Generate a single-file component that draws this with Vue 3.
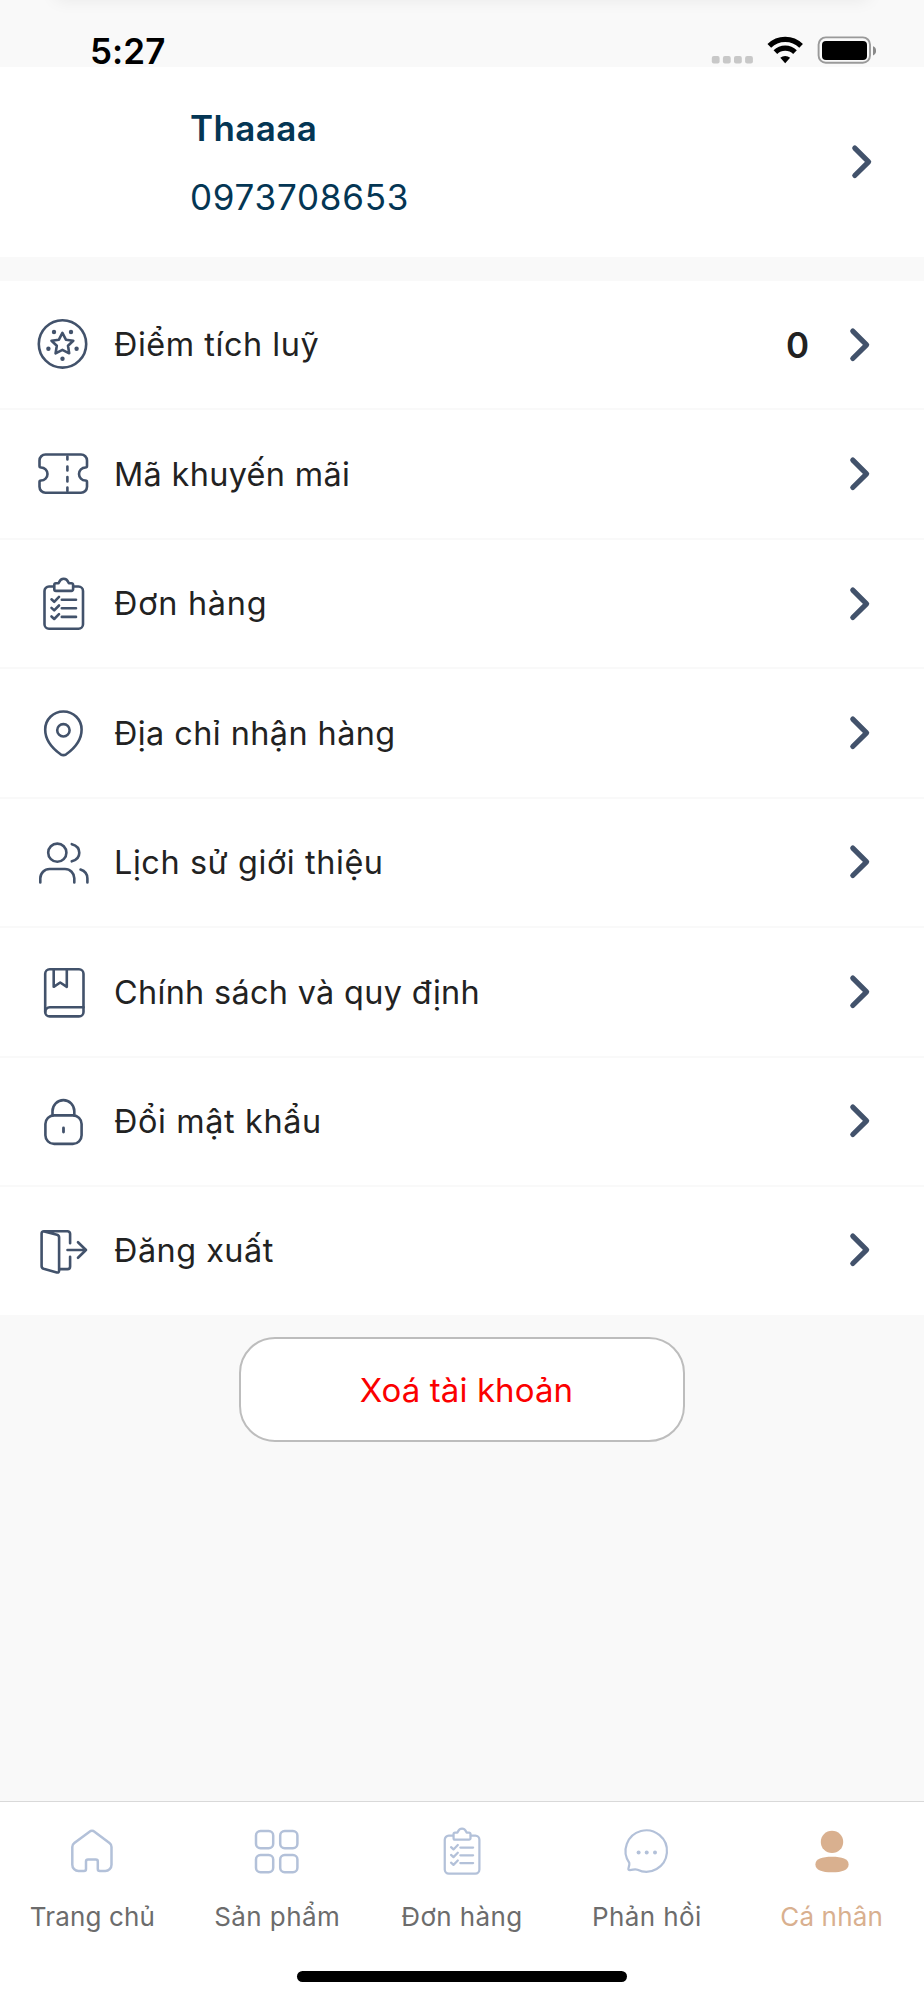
<script setup>
const menu = [
  { key: 'points', label: 'Điểm tích luỹ', value: '0' },
  { key: 'promo', label: 'Mã khuyến mãi' },
  { key: 'orders', label: 'Đơn hàng' },
  { key: 'address', label: 'Địa chỉ nhận hàng' },
  { key: 'referral', label: 'Lịch sử giới thiệu' },
  { key: 'policy', label: 'Chính sách và quy định' },
  { key: 'password', label: 'Đổi mật khẩu' },
  { key: 'logout', label: 'Đăng xuất' }
]

const tabs = [
  { key: 'home', label: 'Trang chủ' },
  { key: 'products', label: 'Sản phẩm' },
  { key: 'tab-orders', label: 'Đơn hàng' },
  { key: 'feedback', label: 'Phản hồi' },
  { key: 'me', label: 'Cá nhân', active: true }
]
</script>

<template>
  <div class="screen">
    <header class="status">
      <div class="edge-shadow"></div>
      <span class="clock">5:27</span>
      <svg class="indicators" width="166" height="32" viewBox="0 0 166 32">
        <g fill="#c8c8c8">
          <rect x="1.8" y="22" width="7.8" height="7.4" rx="2" />
          <rect x="12.9" y="22" width="7.8" height="7.4" rx="2" />
          <rect x="24" y="22" width="7.8" height="7.4" rx="2" />
          <rect x="35.1" y="22" width="7.8" height="7.4" rx="2" />
        </g>
        <g fill="none" stroke="#000">
          <path d="M59.3 11.9a22.6 22.6 0 0 1 31.8 0" stroke-width="5.2" />
          <path d="M65.4 18.2a14 14 0 0 1 19.6 0" stroke-width="5.2" />
        </g>
        <path d="M70.3 23.8a7.2 7.2 0 0 1 9.8 0L75.2 29.2Z" fill="#000" />
        <rect x="108.6" y="3.4" width="51.4" height="25.4" rx="7.2" fill="none" stroke="#9a9a9a" stroke-width="1.9" />
        <rect x="112" y="7" width="45" height="19" rx="4" fill="#000" />
        <path d="M163 12.2c4.2 1.4 4.2 7.8 0 9.2Z" fill="#8a8a8a" />
      </svg>
    </header>

    <section class="profile">
      <div class="who">
        <div class="name">Thaaaa</div>
        <div class="phone">0973708653</div>
      </div>
      <svg class="chevron" width="24" height="38" viewBox="0 0 24 38">
        <path d="M4.8 5.1L18.6 18.8L4.8 32.5" />
      </svg>
    </section>

    <ul class="menu">
      <li v-for="item in menu" :key="item.key" class="row" :class="item.key">
        <svg class="icon" width="56" height="56" viewBox="0 0 56 56">
          <template v-if="item.key === 'points'">
            <circle cx="27.5" cy="26.9" r="23.7" />
            <path d="M27.4 15.9L30.9 22.7L38.3 23.7L33 28.8L34.2 36.3L27.4 32.9L20.6 36.3L21.8 28.8L16.5 23.7L23.9 22.7Z" />
            <g class="solid">
              <circle cx="19" cy="15" r="2.2" />
              <circle cx="36" cy="15" r="2.2" />
              <circle cx="13.4" cy="31.7" r="2.2" />
              <circle cx="41.6" cy="31.7" r="2.2" />
              <circle cx="27.5" cy="41.8" r="2.2" />
            </g>
          </template>
          <template v-else-if="item.key === 'promo'">
            <path d="M10.5 8.5H46a6 6 0 0 1 6 6V20a1.5 1.5 0 0 1 -1.5 1.5a6.5 6.5 0 0 0 0 13a1.5 1.5 0 0 1 1.5 1.5V40.8a6 6 0 0 1 -6 6H10.5a6 6 0 0 1 -6 -6V36a1.5 1.5 0 0 1 1.5 -1.5a6.5 6.5 0 0 0 0 -13a1.5 1.5 0 0 1 -1.5 -1.5V14.5a6 6 0 0 1 6 -6Z" />
            <path d="M32.4 10.5V13.5M32.4 20.5V24.5M32.4 31V35.5M32.4 41.5V45" />
          </template>
          <template v-else-if="item.key === 'orders'">
            <path d="M18.5 10.5H14a4.5 4.5 0 0 0 -4.5 4.5V48.2a4.5 4.5 0 0 0 4.5 4.5H43.5a4.5 4.5 0 0 0 4.5 -4.5V15a4.5 4.5 0 0 0 -4.5 -4.5H38.5" />
            <path d="M20.9 7.2H23.3C24.3 7.2 24 2.7 28.7 2.7C33.4 2.7 33.1 7.2 34.1 7.2H36.5a1.6 1.6 0 0 1 1.6 1.6V13.3a1.6 1.6 0 0 1 -1.6 1.6H20.9a1.6 1.6 0 0 1 -1.6 -1.6V8.8a1.6 1.6 0 0 1 1.6 -1.6Z" />
            <path d="M16.5 23.3L19.2 25.8L24 20.9M26.8 23.7H41M16.5 31.9L19.2 34.4L24 29.5M26.8 32.3H41M16.5 40.5L19.2 43L24 38.1M26.8 40.9H41" />
          </template>
          <template v-else-if="item.key === 'address'">
            <path d="M28.4 6.5C18.2 6.5 10.2 14.5 10.2 24.5C10.2 35 17.5 43.5 25.6 49.3Q28.4 51 31.2 49.3C39.3 43.5 46.6 35 46.6 24.5C46.6 14.5 38.6 6.5 28.4 6.5Z" />
            <circle cx="28.4" cy="25.3" r="6.2" />
          </template>
          <template v-else-if="item.key === 'referral'">
            <circle cx="22.3" cy="18.7" r="9.1" />
            <path d="M5.3 48.5V44.3a9.3 9.3 0 0 1 9.3 -9.3H30a9.3 9.3 0 0 1 9.3 9.3V48.5" />
            <path d="M36.8 10.2c10 2.6 10 14.5 0 17.1M45.5 35.6c4.5 1.5 6.9 4.5 6.9 8.9V48.5" />
          </template>
          <template v-else-if="item.key === 'policy'">
            <rect x="10.2" y="5.3" width="38.3" height="47.1" rx="4.5" />
            <path d="M10.2 48a4.6 4.6 0 0 1 4.6 -4.7H48.5M18.7 5.3V22.8L25.2 18.5L31.8 22.8V5.3" />
          </template>
          <template v-else-if="item.key === 'password'">
            <rect x="10.4" y="22.4" width="36.2" height="28.5" rx="8.7" />
            <path d="M17.5 22.4V18a10.9 10.9 0 0 1 21.8 0V22.4" />
            <path class="keyhole" d="M28.5 35V39" />
          </template>
          <template v-else>
            <path d="M9.3 9.6L22 12.8Q24.1 13.4 24.1 15.6V48.5Q24.1 51 21.8 50.4L8.6 46.8Q6.6 46.2 6.6 44V11.6Q6.6 9.2 9 9.2H32.5a2.6 2.6 0 0 1 2.6 2.6V21.3M35.1 34.7V44.5a2.6 2.6 0 0 1 -2.6 2.6H24.1" />
            <path d="M32.5 28H51M43 20.2L51 28L43 35.8" />
          </template>
        </svg>
        <span class="label">{{ item.label }}</span>
        <span v-if="item.value" class="value">{{ item.value }}</span>
        <svg class="chevron" width="24" height="38" viewBox="0 0 24 38">
          <path d="M4.8 5.1L18.6 18.8L4.8 32.5" />
        </svg>
      </li>
    </ul>

    <button class="delete">Xoá tài khoản</button>

    <nav class="tabs">
      <div v-for="tab in tabs" :key="tab.key" class="tab" :class="[tab.key, { active: tab.active }]">
        <svg class="tab-icon" width="52" height="52" viewBox="0 0 52 52">
          <path v-if="tab.key === 'home'" d="M20 39.400V31.800a2 2 0 0 1 2 -2H29.800a2 2 0 0 1 2 2V39.400a2 2 0 0 0 2 2H39.300a6.200 6.200 0 0 0 6.200 -6.200V17.500a5 5 0 0 0 -2 -4L28.800 2.300a4.600 4.600 0 0 0 -5.600 0L8.300 13.500a5 5 0 0 0 -2 4V35.200a6.200 6.200 0 0 0 6.200 6.200H18a2 2 0 0 0 2 -2Z" transform="translate(0 .6)" />
          <template v-else-if="tab.key === 'products'">
            <rect x="5" y="2" width="17.2" height="17.2" rx="4.5" />
            <rect x="29.2" y="2" width="17.2" height="17.2" rx="4.5" />
            <rect x="5" y="26.1" width="17.2" height="17.2" rx="4.5" />
            <rect x="29.2" y="26.1" width="17.2" height="17.2" rx="4.5" />
          </template>
          <g v-else-if="tab.key === 'tab-orders'" transform="translate(.2 -2.8) scale(.9)">
            <path d="M18.5 10.5H14a4.5 4.5 0 0 0 -4.5 4.5V48.2a4.5 4.5 0 0 0 4.5 4.5H43.5a4.5 4.5 0 0 0 4.5 -4.5V15a4.5 4.5 0 0 0 -4.5 -4.5H38.5" />
            <path d="M20.9 7.2H23.3C24.3 7.2 24 2.7 28.7 2.7C33.4 2.7 33.1 7.2 34.1 7.2H36.5a1.6 1.6 0 0 1 1.6 1.6V13.3a1.6 1.6 0 0 1 -1.6 1.6H20.9a1.6 1.6 0 0 1 -1.6 -1.6V8.8a1.6 1.6 0 0 1 1.6 -1.6Z" />
            <path d="M16.5 23.3L19.2 25.8L24 20.9M26.8 23.7H41M16.5 31.9L19.2 34.4L24 29.5M26.8 32.3H41M16.5 40.5L19.2 43L24 38.1M26.8 40.9H41" />
          </g>
          <template v-else-if="tab.key === 'feedback'">
            <path class="bubble" d="M8.3 33.9A20.7 20.7 0 1 1 16.5 40.8C14 39.6 12.5 40.8 8.9 41.1C5.4 41.3 9 37.4 8.3 33.9Z" />
            <g class="solid">
              <circle cx="17.6" cy="23.4" r="2" />
              <circle cx="25.7" cy="23.4" r="2" />
              <circle cx="34" cy="23.4" r="2" />
            </g>
          </template>
          <g v-else class="solid">
            <circle cx="26" cy="12.9" r="11.2" />
            <path d="M26 27.8C36 27.8 42.6 29.9 42.6 35.4C42.6 41.1 36 43.2 26 43.2C16 43.2 9.4 41.1 9.4 35.4C9.4 29.9 16 27.8 26 27.8Z" />
          </g>
        </svg>
        <span class="tab-label">{{ tab.label }}</span>
      </div>
      <div class="home-indicator"></div>
    </nav>
  </div>
</template>

<style>
body {
  background: #f9f9f9;
}
</style>

<style scoped>
.screen {
  display: flex;
  flex-direction: column;
  width: 924px;
  height: 2000px;
  overflow: hidden;
  background: #f9f9f9;
  font-family: Inter, "Noto Sans", sans-serif;
  color: #222;
}

.status {
  position: relative;
  display: flex;
  justify-content: space-between;
  align-items: flex-start;
  flex: none;
  box-sizing: border-box;
  height: 67px;
  padding: 34px 48px 0 90px;
  color: #000;
}
.edge-shadow {
  position: absolute;
  top: -20px;
  left: 56px;
  right: 56px;
  height: 18px;
  box-shadow: 0 1px 18px rgba(0, 0, 0, 0.08);
}
.clock {
  margin-top: 0.6px;
  font-size: 35px;
  font-weight: 600;
  line-height: 33px;
  letter-spacing: 0.1px;
}
.indicators {
  display: block;
}

.profile {
  display: flex;
  align-items: center;
  flex: none;
  box-sizing: border-box;
  height: 190px;
  padding: 0 50px 0 190px;
  background: #fff;
  color: #043654;
}
.who {
  flex: 1;
  font-size: 35px;
  line-height: 68px;
}
.name {
  font-weight: 600;
  letter-spacing: 0.4px;
}
.phone {
  padding-top: 1px;
  letter-spacing: 0.75px;
}
.chevron {
  flex: none;
  fill: none;
  stroke: #42526b;
  stroke-width: 5.2;
  stroke-linecap: round;
  stroke-linejoin: round;
}

.menu {
  flex: none;
  margin: 24px 0 0;
  padding: 0;
  list-style: none;
  background: #fff;
}
.row {
  display: flex;
  align-items: center;
  box-sizing: border-box;
  height: 129.43px;
  padding: 0 52px 0 35px;
  border-bottom: 2px solid #f9f9f9;
}
.row:last-child {
  height: 128px;
  padding-bottom: 2px;
  border-bottom: 0;
}
.icon {
  flex: none;
  fill: none;
  stroke: #42526b;
  stroke-width: 2.6;
  stroke-linecap: round;
  stroke-linejoin: round;
}
.icon .keyhole {
  stroke-width: 2.8;
}
.icon .solid {
  fill: #42526b;
  stroke: none;
}
.label {
  flex: 1;
  margin-left: 23px;
  padding-top: 1.4px;
  font-size: 32.4px;
  line-height: 48px;
  white-space: nowrap;
}
.points .label { letter-spacing: 0.55px; }
.promo .label { letter-spacing: 0.34px; }
.orders .label { letter-spacing: 0.75px; }
.address .label { letter-spacing: 0.44px; }
.referral .label { letter-spacing: 0.6px; }
.policy .label { letter-spacing: 0.33px; }
.password .label { letter-spacing: 0.62px; }
.logout .label { letter-spacing: 0.5px; }
.value {
  margin-right: 39px;
  padding-top: 1px;
  font-size: 35px;
  font-weight: 600;
  line-height: 48px;
}

.delete {
  flex: none;
  align-self: center;
  box-sizing: border-box;
  width: 446px;
  height: 105px;
  margin-top: 22px;
  padding: 1px 0 0 9px;
  border: 2px solid #bdbdbd;
  border-radius: 36px;
  background: #fff;
  color: #fb0000;
  font-family: inherit;
  font-size: 33px;
  letter-spacing: 0.1px;
}

.tabs {
  position: relative;
  display: grid;
  grid-template-columns: repeat(5, 1fr);
  box-sizing: border-box;
  height: 199px;
  margin-top: auto;
  padding-top: 27px;
  border-top: 1px solid #d9d9d9;
  background: #fff;
}
.tab {
  display: flex;
  flex-direction: column;
  align-items: center;
  color: #6c6c6c;
}
.tab-icon {
  overflow: visible;
  fill: none;
  stroke: #b3c1d9;
  stroke-width: 2.5;
  stroke-linecap: round;
  stroke-linejoin: round;
}
.tab-icon .bubble {
  stroke-width: 2.2;
}
.tab-icon .solid {
  fill: #b3c1d9;
  stroke: none;
}
.tab.active .solid {
  fill: #d9b08f;
}
.tab-label {
  margin-top: 16px;
  font-size: 26px;
  line-height: 40px;
  letter-spacing: 0.4px;
}
.home .tab-label,
.me .tab-label {
  letter-spacing: 0.15px;
}
.active {
  color: #d9b08f;
}
.home-indicator {
  position: absolute;
  bottom: 18px;
  left: 297px;
  width: 330px;
  height: 11px;
  border-radius: 6px;
  background: #000;
}
</style>
